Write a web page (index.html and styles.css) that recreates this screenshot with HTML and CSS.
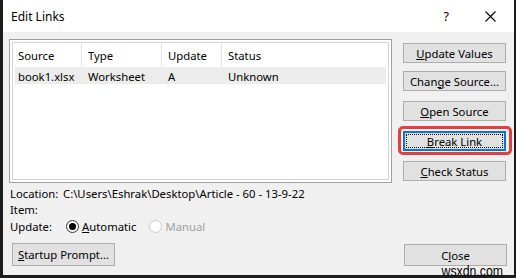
FILE: index.html
```html
<!DOCTYPE html>
<html>
<head>
<meta charset="utf-8">
<title>Edit Links</title>
<link rel="stylesheet" href="styles.css">
</head>
<body>
<div class="window">
  <div class="titlebar">
    <span class="title">Edit Links</span>
    <span class="help">?</span>
    <svg class="close-x" width="11" height="11" viewBox="0 0 11 11"><path d="M0.5 0.5L10.5 10.5M10.5 0.5L0.5 10.5" stroke="#000" stroke-width="1.1" fill="none"/></svg>
  </div>
  <div class="content">
    <div class="main">
      <div class="listbox">
        <div class="list-inner">
          <div class="grid header">
            <div class="cell first">Source</div>
            <div class="cell">Type</div>
            <div class="cell">Update</div>
            <div class="cell last">Status</div>
          </div>
          <div class="grid row selected">
            <div class="cell first">book1.xlsx</div>
            <div class="cell">Worksheet</div>
            <div class="cell">A</div>
            <div class="cell last">Unknown</div>
          </div>
        </div>
      </div>
      <div class="buttons">
        <button class="btn first-btn"><u>U</u>pdate Values</button>
        <button class="btn">Chan<u>g</u>e Source...</button>
        <button class="btn"><u>O</u>pen Source</button>
        <button class="btn focused"><span class="focus-ring"><u>B</u>reak Link</span></button>
        <button class="btn"><u>C</u>heck Status</button>
      </div>
    </div>
    <div class="info">
      <div class="info-row"><span class="label">Location:</span><span class="value">C:\Users\Eshrak\Desktop\Article - 60 - 13-9-22</span></div>
      <div class="info-row"><span class="label">Item:</span></div>
      <div class="info-row">
        <span class="label">Update:</span>
        <span class="radio checked"></span><span class="radio-label"><u>A</u>utomatic</span>
        <span class="radio disabled"></span><span class="radio-label disabled-text">Manual</span>
      </div>
    </div>
    <div class="bottom">
      <button class="btn startup"><u>S</u>tartup Prompt...</button>
      <button class="btn close">C<u>l</u>ose</button>
    </div>
  </div>
  <span class="watermark">wsxdn.com</span>
</div>
</body>
</html>
```
FILE: styles.css
```css
* { box-sizing: border-box; }
html, body { margin: 0; padding: 0; }
body {
  width: 516px;
  height: 278px;
  overflow: hidden;
  font-family: "Noto Sans", "Open Sans", sans-serif;
  font-size: 11.3px;
  color: #000;
  background: #f0f0f0;
}
.window {
  position: relative;
  width: 516px;
  height: 278px;
  display: flex;
  flex-direction: column;
  border-left: 3px solid #1c1c1c;
  border-right: 2px solid #1c1c1c;
  border-bottom: 3px solid #1c1c1c;
  background: #f0f0f0;
}
.titlebar {
  height: 32px;
  flex: none;
  background: #fff;
  display: flex;
  align-items: center;
  padding-left: 8px;
}
.title { font-size: 12px; flex: 1; }
.help { font-size: 12.5px; margin-right: 36px; }
.close-x { margin-right: 18px; }
.content {
  flex: 1;
  display: flex;
  flex-direction: column;
  padding: 7px 7px 0 6px;
}
.main { display: flex; }
.listbox {
  width: 383px;
  height: 144px;
  border: 1px solid #a0a0a0;
  background: #fff;
  padding: 2px;
}
.list-inner {
  height: 100%;
  border: 1px solid #d4d4d4;
  padding: 0 2px;
}
.grid {
  display: grid;
  grid-template-columns: 67px 80px 60px 1fr;
}
.header { height: 24px; }
.header .cell { border-right: 1px solid #e5e5e5; }
.header .cell.last { border-right: none; }
.cell {
  display: flex;
  align-items: center;
  padding-left: 6px;
  white-space: nowrap;
}
.cell.first { padding-left: 3px; }
.row { height: 17px; padding-top: 1px; }
.selected { background: #ececec; }
.buttons {
  margin-left: 11px;
  margin-top: 4px;
  display: flex;
  flex-direction: column;
  gap: 10px;
}
.btn {
  font-family: inherit;
  font-size: 11.3px;
  color: #000;
  width: 103px;
  height: 20px;
  padding: 0;
  background: #e1e1e1;
  border: 1px solid #adadad;
  border-radius: 0;
  display: flex;
  align-items: center;
  justify-content: center;
}
.first-btn { margin-bottom: -2px; }
.focused {
  position: relative;
  border: 2px solid #0078d7;
  padding: 1px;
}
.focus-ring {
  flex: 1;
  align-self: stretch;
  display: flex;
  align-items: center;
  justify-content: center;
  border: 1px dotted #000;
}
.focused::after {
  content: "";
  position: absolute;
  inset: -7px -8px -6px -7px;
  border: 3px solid #e2403f;
  border-radius: 5px;
}
.info {
  margin-top: 2px;
  padding-left: 1px;
}
.info-row {
  height: 16.5px;
  display: flex;
  align-items: center;
  white-space: nowrap;
}
.label { width: 53px; flex: none; }
.radio {
  width: 13px;
  height: 13px;
  border-radius: 50%;
  border: 1px solid #333;
  background: #fff;
  margin-left: 3px;
  margin-right: 3px;
  display: flex;
  align-items: center;
  justify-content: center;
}
.radio.checked::before {
  content: "";
  width: 7px;
  height: 7px;
  border-radius: 50%;
  background: #000;
}
.radio.disabled {
  border-color: #cccccc;
  background: #fff;
  margin-left: 13px;
}
.disabled-text { color: #a0a0a0; }
.bottom {
  margin-top: auto;
  margin-bottom: 9px;
  display: flex;
  justify-content: space-between;
  align-items: flex-end;
  padding-left: 3px;
}
.startup { height: 23px; }
.close { height: 22px; }
.watermark {
  position: absolute;
  right: 11px;
  bottom: -4px;
  font-family: "Liberation Sans", Arial, sans-serif;
  font-size: 15px;
  color: #000;
  transform: scaleX(0.82);
  transform-origin: right bottom;
  line-height: 17px;
}
```
